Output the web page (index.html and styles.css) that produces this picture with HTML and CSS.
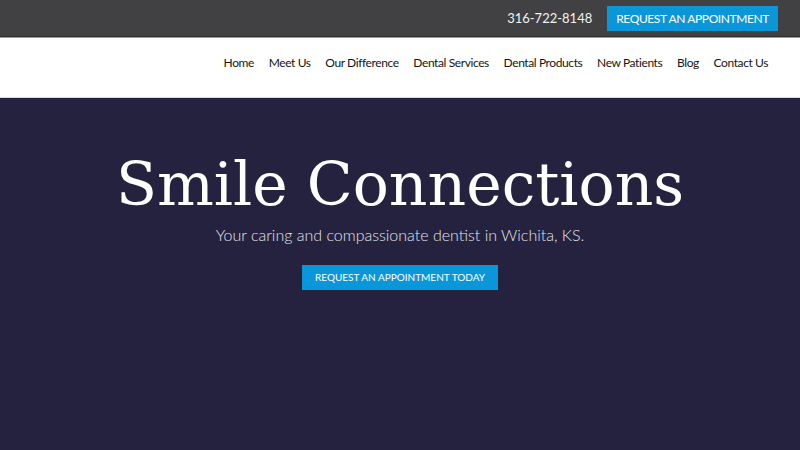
FILE: index.html
```html
<!DOCTYPE html>
<html lang="en">
<head>
  <meta charset="UTF-8" />
  <meta name="viewport" content="width=device-width, initial-scale=1.0"/>
  <title>Smile Connections</title>
  <link rel="stylesheet" href="styles.css">
</head>
<body>

  <div class="top-bar">
    <span class="phone">316-722-8148</span>
    <a class="top-btn" href="#">REQUEST AN APPOINTMENT</a>
  </div>

  <header class="main-header">
    <nav class="main-nav">
      <a href="#">Home</a>
      <a href="#">Meet Us</a>
      <a href="#">Our Difference</a>
      <a href="#">Dental Services</a>
      <a href="#">Dental Products</a>
      <a href="#">New Patients</a>
      <a href="#">Blog</a>
      <a href="#">Contact Us</a>
    </nav>
  </header>

  <section class="hero">
    <h1>Smile Connections</h1>
    <p class="tagline">Your caring and compassionate dentist in Wichita, KS.</p>
    <a class="hero-btn" href="#">REQUEST AN APPOINTMENT TODAY</a>
  </section>

</body>
</html>
```

FILE: styles.css
```css
html, body {
  margin: 0;
  padding: 0;
  height: 100%;
  font-family: Lato, "Open Sans", Arial, sans-serif;
  background-color: #24223f;
}

a {
  text-decoration: none;
}

.top-bar {
  height: 36px;
  background-color: #414143;
  border-bottom: 1px solid #2e2e30;
  box-shadow: 0 1px 0 #a0a0a0;
  display: flex;
  justify-content: flex-end;
  align-items: center;
  padding-right: 22px;
  gap: 15px;
}

.phone {
  color: #f2f2f2;
  font-size: 13px;
}

.top-btn {
  background-color: #0a97d9;
  color: #fff;
  font-size: 12px;
  letter-spacing: -0.4px;
  padding: 0 9px;
  height: 25px;
  line-height: 25px;
  margin-top: 1px;
}

.main-header {
  margin-top: 1px;
  height: 60px;
  background-color: #fff;
  border-bottom: 1px solid #d8d8de;
  display: flex;
  justify-content: flex-end;
  align-items: center;
  padding-right: 32px;
  box-sizing: border-box;
  padding-bottom: 10px;
}

.main-nav {
  display: flex;
  gap: 14.7px;
}

.main-nav a {
  color: #151515;
  font-size: 12px;
  letter-spacing: -0.4px;
}

.hero {
  text-align: center;
  color: #fff;
  padding-top: 51px;
}

.hero h1 {
  margin: 0;
  font-family: "DejaVu Serif", "Liberation Serif", serif;
  font-weight: normal;
  font-size: 60px;
  line-height: 70px;
}

.tagline {
  margin: 6px 0 21px;
  font-size: 16px;
  font-weight: 300;
  color: #e4e4ea;
}

.hero-btn {
  display: inline-block;
  background-color: #0a97d9;
  color: #fff;
  font-size: 10px;
  padding: 0 13px;
  height: 25px;
  line-height: 25px;
}
```
